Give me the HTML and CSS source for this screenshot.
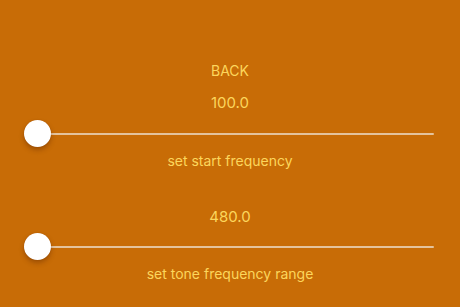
FILE: index.html
```html
<!DOCTYPE html>
<html>
<head>
<meta charset="utf-8">
<link rel="stylesheet" href="styles.css">
</head>
<body>
<main class="screen">
  <div class="back">BACK</div>
  <div class="value value-first">100.0</div>
  <div class="slider slider-first">
    <div class="track"></div>
    <div class="thumb"></div>
  </div>
  <div class="label">set start frequency</div>
  <div class="value value-second">480.0</div>
  <div class="slider slider-second">
    <div class="track"></div>
    <div class="thumb"></div>
  </div>
  <div class="label">set tone frequency range</div>
</main>
</body>
</html>
```
FILE: styles.css
```css
html, body {
  margin: 0;
  padding: 0;
  background: #c86c06;
}
.screen {
  width: 460px;
  height: 307px;
  box-sizing: border-box;
  padding-top: 61px;
  display: flex;
  flex-direction: column;
  align-items: center;
  font-family: Inter, "Noto Sans", sans-serif;
  color: #fcd65c;
  overflow: hidden;
}
.back {
  font-size: 14px;
  line-height: 20px;
}
.value {
  font-size: 15px;
  line-height: 20px;
}
.value-first {
  margin-top: 12px;
}
.value-second {
  margin-top: 36px;
}
.label {
  font-size: 14px;
  line-height: 20px;
  margin-top: 3px;
}
.slider {
  align-self: stretch;
  margin: 0 26px 0 24px;
  height: 28px;
  display: flex;
  align-items: center;
}
.slider-first {
  margin-top: 7px;
}
.slider-second {
  margin-top: 6px;
}
.track {
  flex: 1;
  height: 2px;
  background: #e4c39d;
  border-radius: 1px;
}
.thumb {
  position: absolute;
  width: 27px;
  height: 27px;
  border-radius: 50%;
  background: #ffffff;
  box-shadow: 0 3px 5px rgba(80, 30, 0, 0.35), 0 0 1px rgba(80, 30, 0, 0.3);
}
.slider {
  position: relative;
}
.thumb {
  left: 0;
  top: 0;
}
```
